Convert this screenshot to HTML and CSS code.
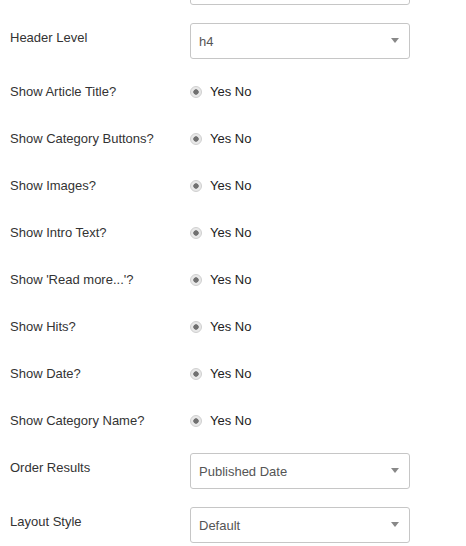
FILE: index.html
```html
<!DOCTYPE html>
<html>
<head>
<meta charset="utf-8">
<link rel="stylesheet" href="styles.css">
</head>
<body>
<div class="form">
  <div class="row sel-row">
    <div class="label"></div>
    <div class="select"><span class="val"></span><span class="arrow"></span></div>
  </div>
  <div class="row sel-row">
    <div class="label">Header Level</div>
    <div class="select"><span class="val">h4</span><span class="arrow"></span></div>
  </div>
  <div class="row radio-row">
    <div class="label">Show Article Title?</div>
    <div class="radios"><span class="radio"></span><span class="opts">Yes No</span></div>
  </div>
  <div class="row radio-row">
    <div class="label">Show Category Buttons?</div>
    <div class="radios"><span class="radio"></span><span class="opts">Yes No</span></div>
  </div>
  <div class="row radio-row">
    <div class="label">Show Images?</div>
    <div class="radios"><span class="radio"></span><span class="opts">Yes No</span></div>
  </div>
  <div class="row radio-row">
    <div class="label">Show Intro Text?</div>
    <div class="radios"><span class="radio"></span><span class="opts">Yes No</span></div>
  </div>
  <div class="row radio-row">
    <div class="label">Show 'Read more...'?</div>
    <div class="radios"><span class="radio"></span><span class="opts">Yes No</span></div>
  </div>
  <div class="row radio-row">
    <div class="label">Show Hits?</div>
    <div class="radios"><span class="radio"></span><span class="opts">Yes No</span></div>
  </div>
  <div class="row radio-row">
    <div class="label">Show Date?</div>
    <div class="radios"><span class="radio"></span><span class="opts">Yes No</span></div>
  </div>
  <div class="row radio-row">
    <div class="label">Show Category Name?</div>
    <div class="radios"><span class="radio"></span><span class="opts">Yes No</span></div>
  </div>
  <div class="row sel-row">
    <div class="label">Order Results</div>
    <div class="select"><span class="val">Published Date</span><span class="arrow"></span></div>
  </div>
  <div class="row sel-row">
    <div class="label">Layout Style</div>
    <div class="select"><span class="val">Default</span><span class="arrow"></span></div>
  </div>
</div>
</body>
</html>
```
FILE: styles.css
```css
html, body {
  margin: 0;
  padding: 0;
  background: #fff;
  overflow: hidden;
}
body {
  font-family: "Liberation Sans", Arial, sans-serif;
  font-size: 13px;
  color: #333;
}
.form {
  margin-top: -31px;
  padding-left: 10px;
}
.row {
  display: flex;
  align-items: flex-start;
  margin-bottom: 18px;
}
.label {
  width: 180px;
  flex: none;
  line-height: 18px;
  padding-top: 6px;
}
.sel-row { height: 36px; }
.radio-row { height: 29px; }
.select {
  box-sizing: border-box;
  width: 220px;
  height: 36px;
  border: 1px solid #c6c6c6;
  border-radius: 3px;
  display: flex;
  align-items: center;
  justify-content: space-between;
  padding: 1px 10px 0 8px;
  color: #555;
}
.arrow {
  width: 0;
  height: 0;
  border-left: 4px solid transparent;
  border-right: 4px solid transparent;
  border-top: 5px solid #888;
  margin-top: -2px;
}
.radios {
  display: flex;
  align-items: center;
  height: 18px;
  margin-top: 5px;
}
.radio {
  box-sizing: border-box;
  width: 12px;
  height: 12px;
  border-radius: 50%;
  border: 1px solid #cfcfcf;
  background: radial-gradient(circle, #707070 0 2.4px, #e8e8e8 3px);
  margin-right: 8px;
  margin-top: 1px;
}
.opts { color: #222; }
```
